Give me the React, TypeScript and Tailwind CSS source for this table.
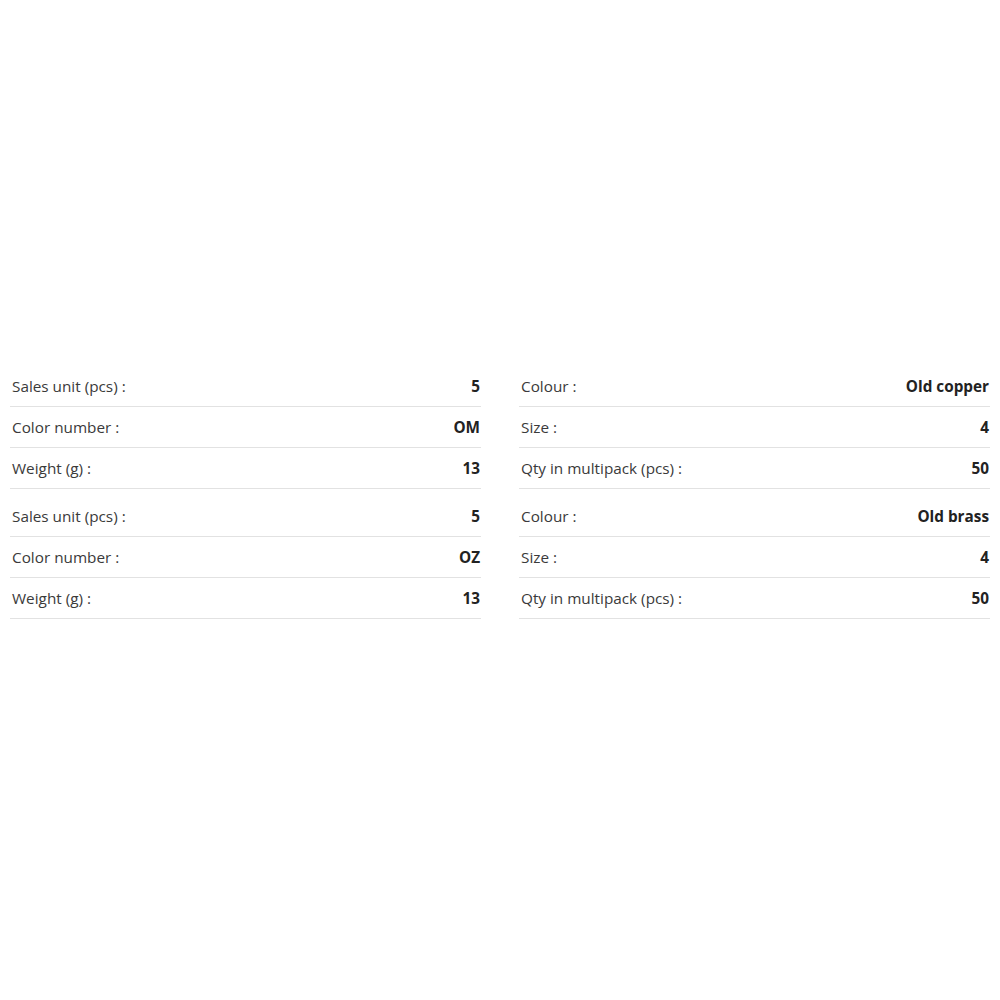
import React from "react";

type Row = { label: string; value: string };

const blocks: { left: Row[]; right: Row[] }[] = [
  {
    left: [
      { label: "Sales unit (pcs) :", value: "5" },
      { label: "Color number :", value: "OM" },
      { label: "Weight (g) :", value: "13" },
    ],
    right: [
      { label: "Colour :", value: "Old copper" },
      { label: "Size :", value: "4" },
      { label: "Qty in multipack (pcs) :", value: "50" },
    ],
  },
  {
    left: [
      { label: "Sales unit (pcs) :", value: "5" },
      { label: "Color number :", value: "OZ" },
      { label: "Weight (g) :", value: "13" },
    ],
    right: [
      { label: "Colour :", value: "Old brass" },
      { label: "Size :", value: "4" },
      { label: "Qty in multipack (pcs) :", value: "50" },
    ],
  },
];

function Column({ rows }: { rows: Row[] }) {
  return (
    <div className="flex flex-col">
      {rows.map((r, i) => (
        <div
          key={i}
          className="flex h-[41px] items-center justify-between border-b border-[#e2e2e2] pl-[2px] pr-[1px]"
        >
          <span className="text-[#3a3a3a]">{r.label}</span>
          <span className="font-bold text-[#222]">{r.value}</span>
        </div>
      ))}
    </div>
  );
}

export default function App() {
  return (
    <div
      className="min-h-screen bg-white px-[10px] pt-[366px] text-[15.3px]"
      style={{ fontFamily: '"Open Sans", "Noto Sans", sans-serif' }}
    >
      {blocks.map((b, i) => (
        <div
          key={i}
          className={`grid grid-cols-2 gap-x-[38px] ${i > 0 ? "pt-[7px]" : ""}`}
        >
          <Column rows={b.left} />
          <Column rows={b.right} />
        </div>
      ))}
    </div>
  );
}
